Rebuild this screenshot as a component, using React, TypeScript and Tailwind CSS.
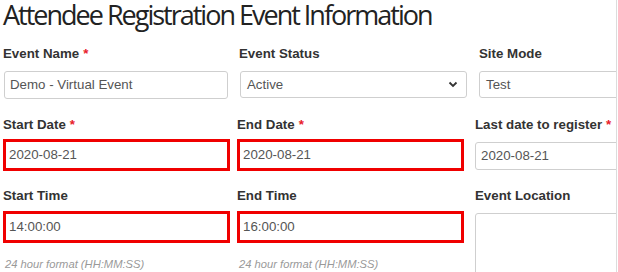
const sans = "font-['Liberation_Sans',Arial,sans-serif]";

function Label({ text, required }: { text: string; required?: boolean }) {
  return (
    <div className="h-4 whitespace-nowrap text-[13.3px] font-bold leading-4 text-[#333]">
      {text}
      {required && <span className="ml-1 text-[#e8202a]">*</span>}
    </div>
  );
}

function Box({ value }: { value: string }) {
  return (
    <div className="flex h-[28px] items-center rounded-[3px] border border-[#cfcfcf] bg-white px-[5px] text-[13.3px] text-[#555]">
      {value}
    </div>
  );
}

function RedBox({ value }: { value: string }) {
  return (
    <div className="flex h-[32px] w-[227px] items-center border-[3px] border-[#f00000] bg-white px-[3px] text-[13.3px] text-[#555]">
      {value}
    </div>
  );
}

const hint = "mt-[14px] whitespace-nowrap text-[11.2px] italic leading-[14px] text-[#999]";

export default function App() {
  return (
    <div className={`h-[272px] w-[617px] overflow-hidden border-r border-[#dcdcdc] bg-white ${sans}`}>
      <h1 className="h-[30px] whitespace-nowrap pl-[3px] font-['Open_Sans',sans-serif] text-[27px] leading-[30px] tracking-[-2px] text-[#222]">
        Attendee Registration Event Information
      </h1>

      {/* row 1 */}
      <div className="mt-[16px] flex pl-[3px]">
        <div className="w-[234px] shrink-0">
          <Label text="Event Name" required />
          <div className="ml-[1px] mt-[9px] w-[224px]">
            <Box value="Demo - Virtual Event" />
          </div>
        </div>
        <div className="w-[238px] shrink-0 pl-[2px]">
          <Label text="Event Status" />
          <div className="ml-[1px] mt-[9px] flex h-[27px] w-[227px] items-center justify-between rounded-[3px] border border-[#cfcfcf] bg-white pl-[6px] pr-[8px] text-[13.3px] text-[#555]">
            Active
            <svg width="10" height="7" viewBox="0 0 10 7" fill="none">
              <path d="M1.5 1.5 5 5l3.5-3.5" stroke="#333" strokeWidth="1.8" />
            </svg>
          </div>
        </div>
        <div className="w-[200px] shrink-0 pl-[4px]">
          <Label text="Site Mode" />
          <div className="mt-[9px] w-[200px]">
            <div className="flex h-[27px] items-center rounded-[3px] border border-[#cfcfcf] bg-white px-[6px] text-[13.3px] text-[#555]">
              Test
            </div>
          </div>
        </div>
      </div>

      {/* row 2 */}
      <div className="mt-[18px] flex pl-[3px]">
        <div className="w-[234px] shrink-0">
          <Label text="Start Date" required />
          <div className="mt-[6px]">
            <RedBox value="2020-08-21" />
          </div>
        </div>
        <div className="w-[238px] shrink-0">
          <Label text="End Date" required />
          <div className="mt-[6px]">
            <RedBox value="2020-08-21" />
          </div>
        </div>
        <div className="w-[200px] shrink-0">
          <Label text="Last date to register" required />
          <div className="mt-[9px] w-[200px]">
            <Box value="2020-08-21" />
          </div>
        </div>
      </div>

      {/* row 3 */}
      <div className="mt-[17px] flex pl-[3px]">
        <div className="w-[234px] shrink-0">
          <Label text="Start Time" />
          <div className="mt-[7px]">
            <RedBox value="14:00:00" />
          </div>
          <div className={`${hint} pl-[2px]`}>24 hour format (HH:MM:SS)</div>
        </div>
        <div className="w-[238px] shrink-0">
          <Label text="End Time" />
          <div className="mt-[7px]">
            <RedBox value="16:00:00" />
          </div>
          <div className={`${hint} pl-[2px]`}>24 hour format (HH:MM:SS)</div>
        </div>
        <div className="w-[200px] shrink-0">
          <Label text="Event Location" />
          <div className="mt-[9px] h-[80px] w-[200px] rounded-[3px] border border-[#cfcfcf] bg-white" />
        </div>
      </div>
    </div>
  );
}
